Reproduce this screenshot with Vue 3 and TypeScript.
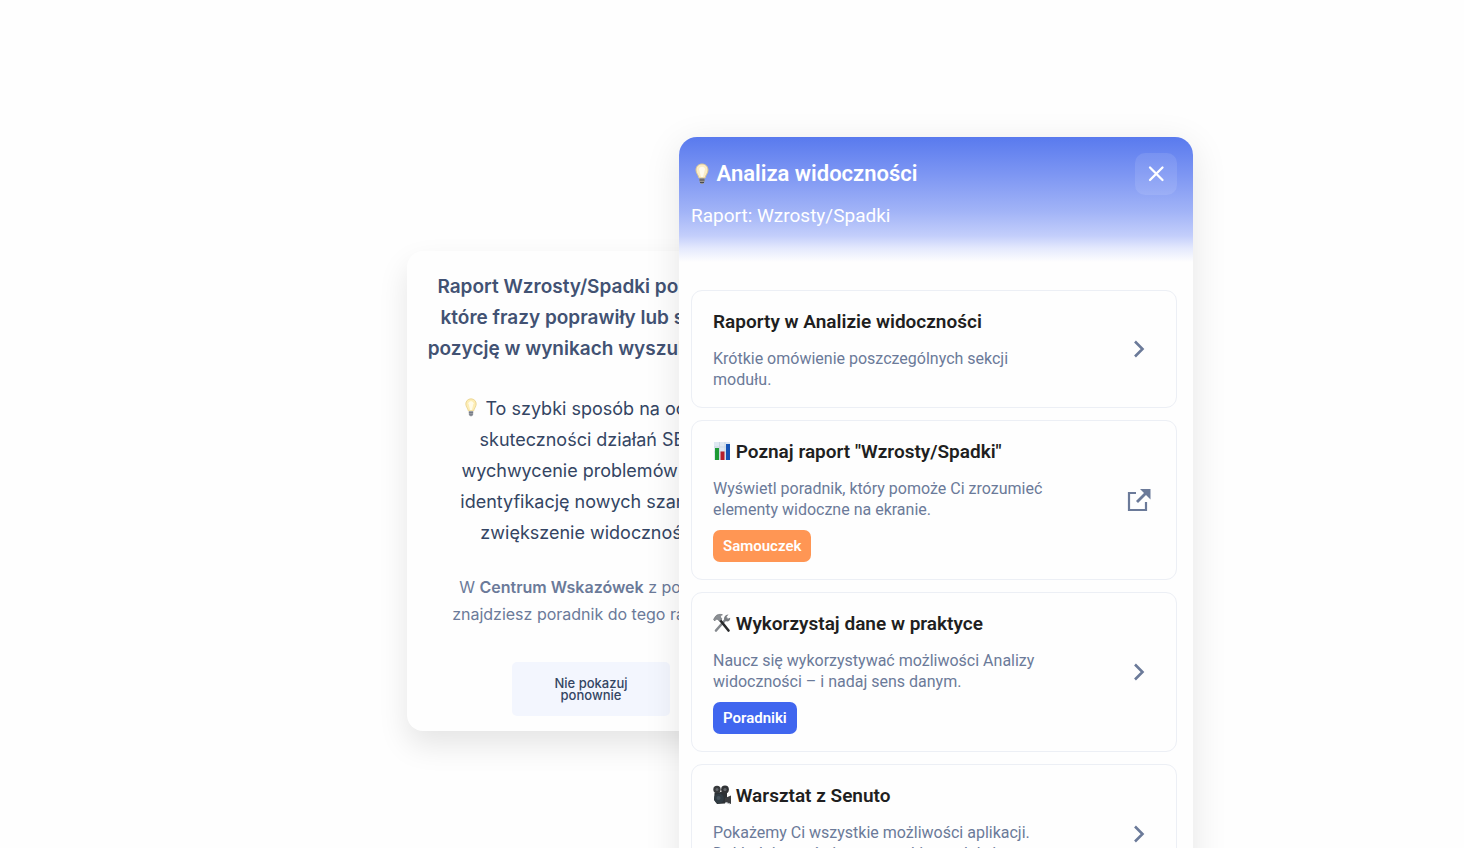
<script setup lang="ts">
interface Guide {
  icon: 'none' | 'chart' | 'tools' | 'camera'
  title: string
  text: string
  tag?: string
  tone?: 'orange' | 'blue'
  external?: boolean
}

const headline: string[] = [
  'Raport Wzrosty/Spadki pokazuje,',
  'które frazy poprawiły lub straciły',
  'pozycję w wynikach wyszukiwania.',
]
const benefits: string[] = [
  'To szybki sposób na ocenę',
  'skuteczności działań SEO,',
  'wychwycenie problemów oraz',
  'identyfikację nowych szans na',
  'zwiększenie widoczności.',
]
const guides: Guide[] = [
  { icon: 'none', title: 'Raporty w Analizie widoczności', text: 'Krótkie omówienie poszczególnych sekcji modułu.' },
  {
    icon: 'chart',
    title: 'Poznaj raport "Wzrosty/Spadki"',
    text: 'Wyświetl poradnik, który pomoże Ci zrozumieć elementy widoczne na ekranie.',
    tag: 'Samouczek',
    tone: 'orange',
    external: true,
  },
  {
    icon: 'tools',
    title: 'Wykorzystaj dane w praktyce',
    text: 'Naucz się wykorzystywać możliwości Analizy widoczności – i nadaj sens danym.',
    tag: 'Poradniki',
    tone: 'blue',
  },
  {
    icon: 'camera',
    title: 'Warsztat z Senuto',
    text: 'Pokażemy Ci wszystkie możliwości aplikacji. Dokładnie omówimy wszystkie moduły i odpowiemy na pytania.',
  },
]
</script>

<template>
  <main class="stage">
    <section class="hint" aria-label="Wskazówka">
      <h2 class="headline">
        <span v-for="line in headline" :key="line" class="line">{{ line }}</span>
      </h2>
      <p class="benefits">
        <span v-for="(line, i) in benefits" :key="line" class="line">
          <svg v-if="i === 0" class="bulb" viewBox="0 0 14 22" aria-hidden="true">
            <path d="M7 1C3.400 1 1 3.600 1 7c0 3 2.200 4.800 3 8h6c.8-3.200 3-5 3-8 0-3.400-2.400-6-6-6z" fill="#fdedb4" stroke="#e9d390" />
            <path d="M4 6c1-3 5-3 6 0l-2 8H6z" fill="#fffbe9" />
            <path d="M4.500 15h5v4l-1.500 2h-2l-1.500-2z" fill="#9da1a9" />
            <path d="M4.500 17h5M5 19.500h4" stroke="#686d77" />
          </svg>
          {{ line }}
        </span>
      </p>
      <p class="note">
        <span class="line">W <strong>Centrum Wskazówek</strong> z pomocą</span>
        <span class="line">znajdziesz poradnik do tego raportu.</span>
      </p>
      <button class="dismiss" type="button">Nie pokazuj ponownie</button>
    </section>

    <section class="panel" aria-label="Centrum Wskazówek">
      <header class="head">
        <div>
          <h1 class="head-title">
            <svg class="bulb" viewBox="0 0 14 22" aria-hidden="true">
              <path d="M7 1C3.400 1 1 3.600 1 7c0 3 2.200 4.800 3 8h6c.8-3.200 3-5 3-8 0-3.400-2.400-6-6-6z" fill="#fbecc6" stroke="#dcc995" />
              <path d="M4 6c1-3 5-3 6 0l-2 8H6z" fill="#fffbee" />
              <path d="M4.500 15h5v4l-1.500 2h-2l-1.500-2z" fill="#9a9690" />
              <path d="M4.500 17h5M5 19.500h4" stroke="#4b4b50" />
            </svg>
            Analiza widoczności
          </h1>
          <p class="head-sub">Raport: Wzrosty/Spadki</p>
        </div>
        <button class="close" type="button" aria-label="Zamknij">
          <svg viewBox="0 0 16 16" aria-hidden="true"><path d="M2 1.500l12.500 12.500M14.500 1.500L2 14" /></svg>
        </button>
      </header>

      <ul class="list">
        <li v-for="g in guides" :key="g.title">
          <a href="#" class="card">
            <div class="body">
              <h3 class="title">
                <svg v-if="g.icon === 'chart'" class="emoji" viewBox="0 0 18 20" aria-hidden="true">
                  <path d="M1 1h16v18H1z" fill="#dfe8f2" />
                  <path d="M1 6h16M1 11h16M6.500 1v18M12 1v18" stroke="#cbd7e3" />
                  <path d="M2 7h4v12H2z" fill="#1d9a35" />
                  <path d="M7.500 10.500h4V19h-4z" fill="#b51f2c" />
                  <path d="M13 3h4v16h-4z" fill="#1553b5" />
                </svg>
                <svg v-else-if="g.icon === 'tools'" class="emoji" viewBox="0 0 18 20" aria-hidden="true">
                  <path d="M13.500 5.500L3 17.500" stroke="#85898e" stroke-width="2.600" stroke-linecap="round" />
                  <path d="M15.500 1.500l-2.500 3 1 1.500 3.200-1.300c.3 2.400-1.600 4.100-4 3.600-2-.5-2.700-2.600-1.800-4.300.8-1.600 2.300-2.600 4.100-2.500z" fill="#777b80" />
                  <path d="M7 7l8.500 10.500" stroke="#28292b" stroke-width="2.600" stroke-linecap="round" />
                  <path d="M.5 6.500l1.800-3C4 1.400 6.500.8 9.500 1.800 7.800 2.300 7.300 3 7.700 4.200L9 6 6.500 8.300 4.800 6.400 3 6.200 1.800 8z" fill="#8b8f94" stroke="#5c6065" stroke-width=".5" />
                </svg>
                <svg v-else-if="g.icon === 'camera'" class="emoji" viewBox="0 0 18 20" aria-hidden="true">
                  <path d="M1.500 8L14 6v8l-2 4.500-8 .5-3-4z" fill="#2c3135" />
                  <circle cx="4" cy="4.500" r="3.700" fill="#37393c" />
                  <circle cx="12" cy="4.500" r="3.900" fill="#303235" />
                  <circle cx="4" cy="4.500" r="1.500" fill="#5f6367" />
                  <circle cx="12" cy="4.500" r="1.600" fill="#5f6367" />
                  <circle cx="6" cy="13.500" r="4.800" fill="#303b43" />
                  <circle cx="5.500" cy="13" r="2" fill="#46525b" />
                  <path d="M12 13l6-2.500V19l-6-2z" fill="#3b3d40" />
                  <path d="M13 17.500l4 1.500" stroke="#b9bcc0" />
                </svg>
                {{ g.title }}
              </h3>
              <p class="text">{{ g.text }}</p>
              <span v-if="g.tag" class="tag" :class="g.tone">{{ g.tag }}</span>
            </div>
            <svg v-if="g.external" class="go" viewBox="0 0 24 24" aria-hidden="true">
              <path d="M9 5H2v17h17v-8" fill="none" stroke="#6b7a99" stroke-width="2.200" />
              <path d="M10 14L19 5" stroke="#6b7a99" stroke-width="2.800" />
              <path d="M13 1h10.500v10.500z" fill="#6b7a99" />
            </svg>
            <svg v-else class="go" viewBox="0 0 24 24" aria-hidden="true">
              <path d="M8 4.500l7.500 7.500L8 19.500" fill="none" stroke="#6b7a99" stroke-width="2.600" />
            </svg>
          </a>
        </li>
      </ul>
    </section>
  </main>
</template>

<style>
body {
  background: #fefefe;
  overflow: hidden;
}
</style>

<style scoped>
* {
  box-sizing: border-box;
}
h1,
h2,
h3,
p,
ul {
  margin: 0;
  padding: 0;
}
.stage {
  display: grid;
  grid-template-columns: 272px 96px 418px;
  justify-content: center;
  align-items: start;
  height: 100vh;
  padding: 137px 0 0 136px;
  overflow: hidden;
}
.hint {
  grid-area: 1 / 1 / 2 / 3;
  display: flex;
  flex-direction: column;
  align-items: center;
  margin-top: 114px;
  padding: 20px 24px 15px;
  border-radius: 16px;
  background: #fefefe;
  box-shadow: 0 14px 30px rgba(0, 0, 0, 0.1);
  font-family: Inter, "Liberation Sans", sans-serif;
  text-align: center;
  white-space: nowrap;
}
.line {
  display: block;
}
.headline {
  color: #425273;
  font-size: 19px;
  font-weight: 600;
  line-height: 31px;
}
.benefits {
  margin-top: 29px;
  color: #344563;
  font-size: 18px;
  line-height: 31px;
}
.note {
  margin-top: 26px;
  color: #6b7a99;
  font-size: 16px;
  line-height: 27px;
}
.note strong {
  font-weight: 600;
}
.dismiss {
  width: 158px;
  margin-top: 34px;
  padding: 15px 36px;
  border: 0;
  border-radius: 5px;
  background: #f3f6fe;
  color: #344563;
  font: 500 13px/12px Inter, "Liberation Sans", sans-serif;
  white-space: normal;
}
.bulb {
  width: 14px;
  height: 22px;
  vertical-align: -4px;
}
.benefits .bulb {
  height: 19px;
  margin-right: 2px;
  vertical-align: -2px;
}
.panel {
  grid-area: 1 / 2 / 2 / 4;
  z-index: 1;
  min-height: 800px;
  border-radius: 18px;
  background: #fefefe;
  box-shadow: 0 8px 36px rgba(0, 0, 0, 0.1);
  font-family: Roboto, "Liberation Sans", sans-serif;
}
.head {
  display: flex;
  justify-content: space-between;
  align-items: flex-start;
  height: 125px;
  padding: 16px 16px 0 12px;
  border-radius: 18px 18px 0 0;
  background: linear-gradient(#597aee 0%, #7d96f3 30%, #a2b4f7 60%, #c3cefb 79%, #e4e9fd 89%, #fefefe 100%);
  color: #fff;
}
.head-title {
  padding-left: 4px;
  font-size: 22px;
  font-weight: 600;
  line-height: 42px;
}
.head-title .bulb {
  margin-right: 2px;
}
.head-sub {
  margin-top: 9px;
  font-size: 19px;
  line-height: 24px;
}
.close {
  display: grid;
  place-items: center;
  width: 42px;
  height: 42px;
  padding: 0;
  border: 0;
  border-radius: 10px;
  background: rgba(255, 255, 255, 0.1);
}
.close svg {
  width: 16px;
  height: 16px;
  fill: none;
  stroke: #fff;
  stroke-width: 2.300;
  stroke-linecap: round;
  overflow: visible;
}
.list {
  display: grid;
  gap: 12px;
  padding: 28px 16px 0 12px;
  list-style: none;
}
.card {
  display: flex;
  justify-content: space-between;
  align-items: center;
  padding: 0 25px 0 21px;
  border: 1px solid #eceff5;
  border-radius: 11px;
  color: inherit;
  text-decoration: none;
}
.body {
  width: 340px;
  padding: 19px 0 17px;
}
.title {
  color: #1f1f21;
  font-size: 19px;
  font-weight: 600;
  line-height: 24px;
}
.emoji {
  width: 18px;
  height: 20px;
  vertical-align: -3px;
}
.text {
  margin-top: 14px;
  color: #6b7a99;
  font-size: 16px;
  line-height: 21px;
}
.tag {
  display: block;
  width: fit-content;
  margin-top: 10px;
  padding: 0 10px;
  border-radius: 7px;
  color: #fff;
  font-size: 15px;
  font-weight: 600;
  line-height: 32px;
}
.tag.orange {
  background: #ff9654;
}
.tag.blue {
  background: #4066ef;
}
.go {
  flex: none;
  width: 24px;
  height: 24px;
}
</style>
